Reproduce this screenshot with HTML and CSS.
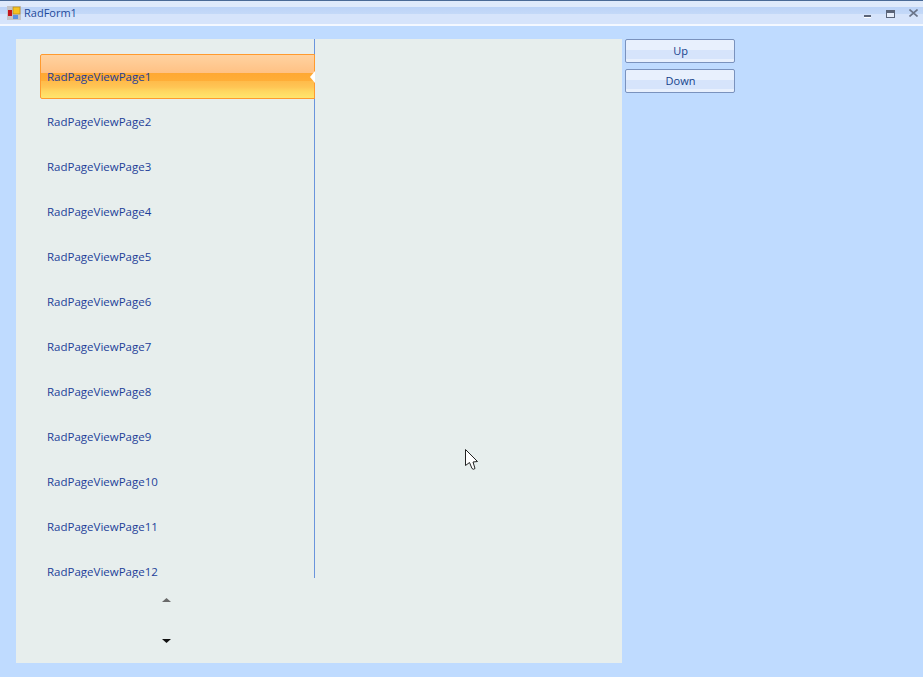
FILE: index.html
```html
<!DOCTYPE html>
<html lang="en">
<head>
<meta charset="utf-8">
<title>RadForm1</title>
<link rel="stylesheet" href="styles.css">
</head>
<body>
<div class="window">
  <header class="titlebar">
    <svg class="app-icon" width="14" height="14" viewBox="0 0 14 14">
      <rect x="0" y="0" width="14" height="14" fill="#c4c4c8"/>
      <rect x="1" y="4" width="4" height="6" fill="#c4151c"/>
      <rect x="6" y="1" width="7" height="7" fill="#f5c21f" stroke="#a8801a" stroke-width="0.6"/>
      <rect x="6" y="9" width="5" height="4" fill="#5b93e0"/>
    </svg>
    <span class="title">RadForm1</span>
    <div class="controls">
      <svg class="ctl-min" width="7" height="3" viewBox="0 0 7 3"><rect x="0" y="0" width="7" height="2" fill="#5a6478"/><rect x="0" y="2" width="7" height="1" fill="#fff"/></svg>
      <svg class="ctl-max" width="9" height="8" viewBox="0 0 9 8"><rect x="0.5" y="0.5" width="8" height="7" fill="#e6eefb" stroke="#5a6478"/><rect x="0" y="0" width="9" height="3" fill="#5a6478"/></svg>
      <svg class="ctl-close" width="9" height="8" viewBox="0 0 9 8"><path d="M0.5 0.5 L8.5 7.5 M8.5 0.5 L0.5 7.5" stroke="#6a7488" stroke-width="1.6"/></svg>
    </div>
  </header>
  <main class="client">
    <section class="pageview">
      <div class="strip">
        <ul class="items">
          <li class="item selected">RadPageViewPage1<i class="notch"></i></li>
          <li class="item">RadPageViewPage2</li>
          <li class="item">RadPageViewPage3</li>
          <li class="item">RadPageViewPage4</li>
          <li class="item">RadPageViewPage5</li>
          <li class="item">RadPageViewPage6</li>
          <li class="item">RadPageViewPage7</li>
          <li class="item">RadPageViewPage8</li>
          <li class="item">RadPageViewPage9</li>
          <li class="item">RadPageViewPage10</li>
          <li class="item">RadPageViewPage11</li>
          <li class="item">RadPageViewPage12</li>
        </ul>
        <div class="scrollers">
          <svg class="arrow" width="9" height="4" viewBox="0 0 9 4"><path d="M4.5 0 L9 4 L0 4 Z" fill="#6a6a6a"/></svg>
          <svg class="arrow" width="9" height="4" viewBox="0 0 9 4"><path d="M0 0 L9 0 L4.5 4 Z" fill="#111"/></svg>
        </div>
      </div>
    </section>
    <aside class="actions">
      <button class="btn" type="button">Up</button>
      <button class="btn" type="button">Down</button>
    </aside>
  </main>
  <svg class="cursor" width="14" height="22" viewBox="0 0 14 22"><path d="M0.5 0.5 L0.5 16.5 L4.5 13.5 L7 19.5 Q8.5 21 10 19.5 L8 13 L12.5 12.5 Z" fill="#fff" stroke="#222" stroke-width="1"/></svg>
</div>
</body>
</html>
```
FILE: styles.css
```css
* { box-sizing: border-box; }
html, body { margin: 0; height: 100%; }
body { font-family: "Open Sans", "Liberation Sans", sans-serif; font-size: 11.5px; color: #15428b; background: #bfdbff; overflow: hidden; }
.window { position: relative; height: 677px; width: 923px; display: flex; flex-direction: column; }
.titlebar { height: 26px; flex: none; display: flex; align-items: center; padding: 0 5px 0 7px; border-top: 1px solid #4a6a96; border-bottom: 2px solid #f4f8ff; background: linear-gradient(#dfeafb 0, #dfeafb 6px, #bcd3f7 6px, #c4d9f8 13px, #d6e4fb 13px, #d6e4fb 100%); }
.app-icon { flex: none; }
.title { margin-left: 3px; font-size: 11px; color: #1e4a9a; line-height: 14px; }
.controls { margin-left: auto; display: flex; align-items: flex-start; height: 100%; }
.ctl-min { margin-top: 14px; }
.ctl-max { margin: 9px 0 0 15px; }
.ctl-close { margin: 8px 0 0 14px; }
.client { flex: 1; display: flex; align-items: flex-start; gap: 3px; padding: 13px 0 0 16px; }
.pageview { width: 606px; height: 624px; background: #e7eeed; }
.strip { width: 299px; display: flex; flex-direction: column; }
.items { list-style: none; margin: 0; padding: 15px 0 0 24px; height: 539px; overflow: hidden; background: linear-gradient(#6a94dc, #6a94dc) right top / 1px 100% no-repeat; }
.item { position: relative; height: 45px; width: 275px; display: flex; align-items: center; padding-left: 7px; color: #1d3f99; white-space: nowrap; }
.selected { border: 1px solid #ff9a2e; border-radius: 2px 0 0 2px; padding-left: 6px; background: linear-gradient(#ffd2a0 0, #ffc184 18px, #ffa832 18px, #ffae38 26px, #ffbb4a 26px, #ffc555 32px, #ffd660 36px, #ffe56d 43px); }
.notch { position: absolute; right: -1px; top: 50%; margin-top: -6px; width: 0; height: 0; border-style: solid; border-width: 6px 5px 6px 0; border-color: transparent #fff transparent transparent; }
.scrollers { height: 85px; display: flex; flex-direction: column; align-items: center; gap: 37px; padding: 20px 0 0 0; width: 301px; }
.actions { display: flex; flex-direction: column; gap: 6px; }
.btn { width: 110px; height: 24px; padding: 0 0 2px 1px; font: inherit; font-size: 11px; color: #15428b; border: 1px solid #7a92bd; border-radius: 2px; background: linear-gradient(#e8f0fd 0, #e8f0fd 45%, #d6e4fb 45%, #d6e4fb 85%, #e8f0fd 85%); }
.cursor { position: absolute; left: 465px; top: 449px; }
```
